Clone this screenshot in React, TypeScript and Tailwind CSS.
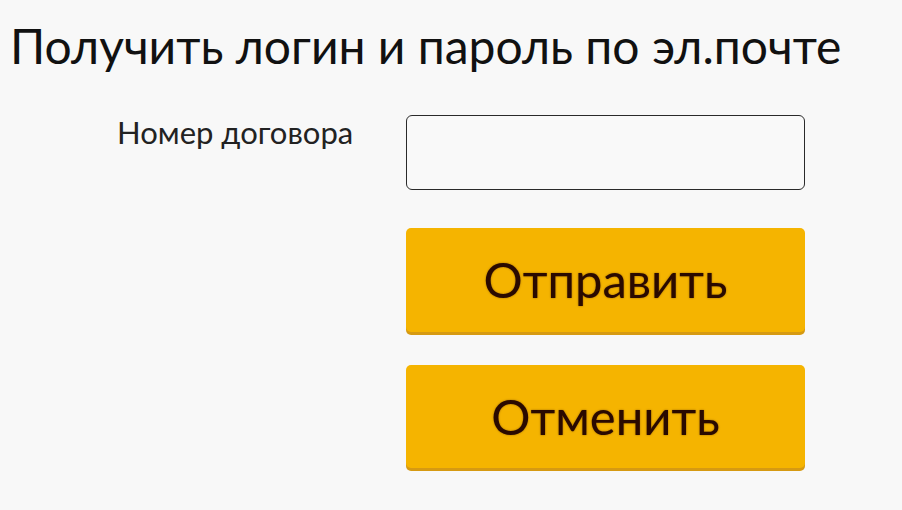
export default function App() {
  return (
    <div
      className="h-[510px] w-[902px] overflow-hidden bg-[#f8f8f8] text-[#111]"
      style={{ fontFamily: "Lato, 'Open Sans', sans-serif" }}
    >
      <h1 className="pt-[17px] pl-[10px] text-[48px] leading-[58px] font-normal whitespace-nowrap">
        Получить логин и пароль по эл.почте
      </h1>
      <div className="mt-[40px] flex">
        <label className="w-[406px] pt-[2px] pl-[117px] text-[31px] leading-[30px] text-[#222]">
          Номер договора
        </label>
        <div className="flex w-[399px] flex-col">
          <input
            type="text"
            className="h-[75px] w-full rounded-[6px] border-[1.5px] border-[#2a2a2a] bg-[#f9f9f9] outline-none"
          />
          <button className="mt-[38px] h-[104px] w-full rounded-[5px] bg-[#f5b400] text-[49px] text-[#2a0a00] shadow-[0_3px_0_#d69a12] [text-shadow:0_0_2px_rgba(60,20,0,0.5)]">
            Отправить
          </button>
          <button className="mt-[33px] h-[103px] w-full rounded-[5px] bg-[#f5b400] text-[49px] text-[#2a0a00] shadow-[0_3px_0_#d69a12] [text-shadow:0_0_2px_rgba(60,20,0,0.5)]">
            Отменить
          </button>
        </div>
      </div>
    </div>
  );
}
